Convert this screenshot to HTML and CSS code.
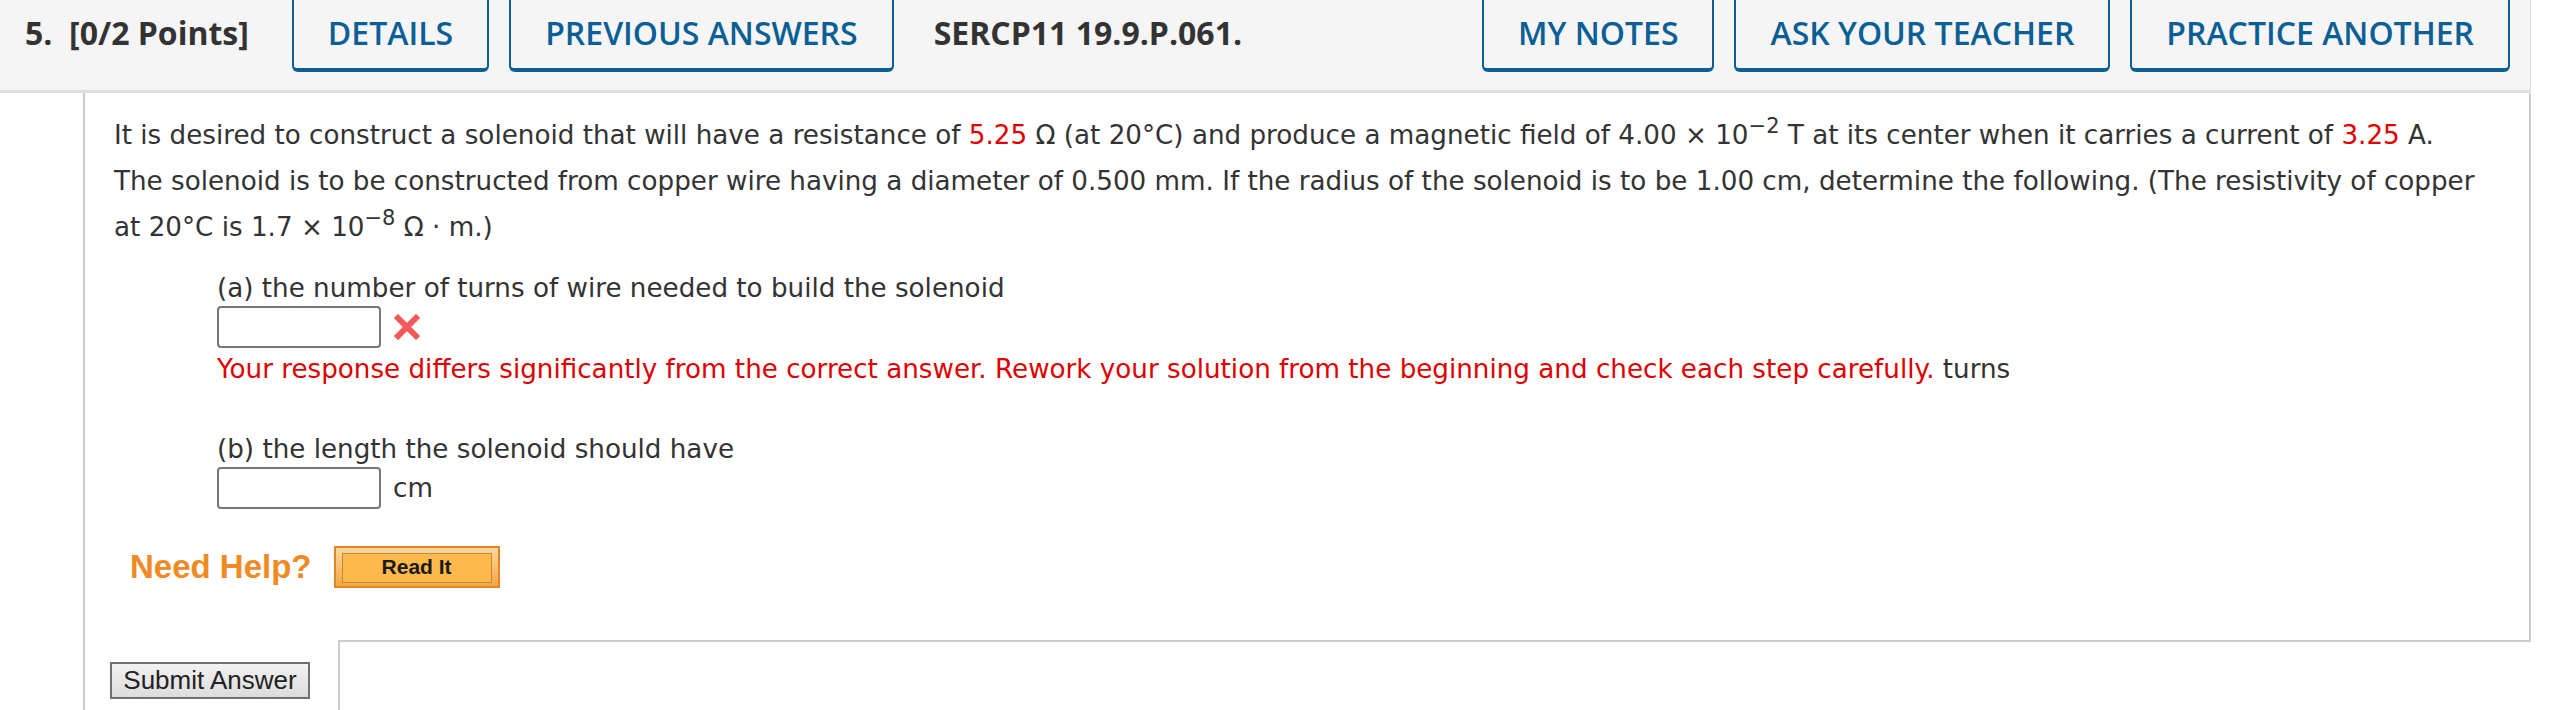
FILE: index.html
```html
<!DOCTYPE html>
<html lang="en">
<head>
    <meta charset="UTF-8">
    <title>Question 5</title>
    <link rel="stylesheet" href="styles.css">
</head>
<body>
    <header class="qbar">
        <span class="qnum">5.&nbsp; [0/2 Points]</span>
        <button class="tab">DETAILS</button>
        <button class="tab">PREVIOUS ANSWERS</button>
        <span class="qcode">SERCP11 19.9.P.061.</span>
        <div class="spacer"></div>
        <button class="tab">MY NOTES</button>
        <button class="tab">ASK YOUR TEACHER</button>
        <button class="tab">PRACTICE ANOTHER</button>
    </header>

    <div class="question">
        <div class="qbody">
            <p class="prompt">It is desired to construct a solenoid that will have a resistance of <span class="given">5.25</span> &Omega; (at 20&deg;C) and produce a magnetic field of 4.00 &times; 10<sup>&minus;2</sup> T at its center when it carries a current of <span class="given">3.25</span> A. The solenoid is to be constructed from copper wire having a diameter of 0.500 mm. If the radius of the solenoid is to be 1.00 cm, determine the following. (The resistivity of copper at 20&deg;C is 1.7 &times; 10<sup>&minus;8</sup> &Omega; &middot; m.)</p>

            <div class="part">
                <div class="part-label">(a) the number of turns of wire needed to build the solenoid</div>
                <div class="answer-row">
                    <input class="answer" type="text">
                    <svg class="wrong" width="28" height="26" viewBox="0 0 28 26">
                        <path d="M5 4 L23 22 M23 4 L5 22" stroke="#f35a5a" stroke-width="6" stroke-linecap="square"/>
                    </svg>
                </div>
                <div class="feedback"><span class="red">Your response differs significantly from the correct answer. Rework your solution from the beginning and check each step carefully.</span> turns</div>
            </div>

            <div class="part part-b">
                <div class="part-label">(b) the length the solenoid should have</div>
                <div class="answer-row">
                    <input class="answer" type="text">
                    <span class="unit">cm</span>
                </div>
            </div>

            <div class="help">
                <span class="help-title">Need Help?</span>
                <button class="readit"><span>Read It</span></button>
            </div>
        </div>

        <div class="qfoot">
            <button class="submit">Submit Answer</button>
            <div class="qfoot-box"></div>
        </div>
    </div>
</body>
</html>
```

FILE: styles.css
```css
body {
    margin: 0;
    padding: 0;
    background-color: #fff;
    color: #333;
    font-family: "DejaVu Sans", Verdana, sans-serif;
    overflow: hidden;
}
.qbar {
    display: flex;
    align-items: flex-end;
    margin: -20px 23px 0 0;
    padding: 0 20px 18px 25px;
    background-color: #f5f5f5;
    border-bottom: 3px solid #ddd;
    border-right: 1px solid #ddd;
    border-bottom-right-radius: 3px;
    font-family: "Open Sans", sans-serif;
    font-size: 32px;
    font-weight: 600;
    line-height: 38px;
}
.qnum, .qcode {
    color: #333;
    padding-bottom: 20px;
    white-space: nowrap;
}
.qnum {
    font-weight: 700;
    margin-right: 43px;
}
.qcode {
    font-weight: 700;
    margin-left: 20px;
}
.spacer {
    flex-grow: 1;
}
.tab {
    font: inherit;
    color: #0b5f95;
    background-color: #f5f5f5;
    border: 2px solid #0b5f95;
    border-top: none;
    border-bottom-width: 4px;
    border-radius: 0 0 6px 6px;
    padding: 34px 34px 16px;
    margin-right: 20px;
    white-space: nowrap;
}
.tab:last-child {
    margin-right: 0;
}
.question {
    margin: 0 23px 0 83px;
    border-left: 2px solid #ccc;
}
.qbody {
    border-right: 2px solid #ccc;
    padding: 19px 46px 52px 29px;
    font-size: 26.2px;
}
.prompt {
    margin: 0;
    line-height: 46px;
}
.prompt sup {
    font-size: 21px;
    line-height: 0;
    vertical-align: 11px;
}
.given, .red {
    color: #e00000;
}
.part {
    margin: 20px 0 0 103px;
    line-height: 36px;
}
.part-b {
    margin-top: 44px;
}
.answer-row {
    display: flex;
    align-items: center;
    height: 42px;
}
.answer {
    width: 164px;
    height: 42px;
    box-sizing: border-box;
    border: 2px solid #777;
    border-radius: 4px;
    background-color: #fff;
    margin: 0;
}
.wrong {
    margin-left: 12px;
}
.unit {
    margin-left: 12px;
}
.feedback {
    margin-top: 3px;
}
.help {
    display: flex;
    align-items: center;
    margin: 37px 0 0 16px;
}
.help-title {
    font-family: "Liberation Sans", Arial, sans-serif;
    font-weight: bold;
    font-size: 33px;
    color: #f08a24;
    margin-right: 22px;
}
.readit {
    width: 166px;
    height: 42px;
    padding: 5px 6px;
    border: 2px solid #e08528;
    background: linear-gradient(#ffd7a0, #f7a640);
    box-sizing: border-box;
}
.readit span {
    display: block;
    height: 100%;
    border: 1px solid #c48a3e;
    background-color: #fdb94b;
    font-family: "Liberation Sans", Arial, sans-serif;
    font-weight: bold;
    font-size: 21px;
    line-height: 26px;
    color: #1a1a1a;
}
.qfoot {
    display: flex;
    align-items: flex-start;
}
.submit {
    margin: 22px 0 0 25px;
    width: 200px;
    height: 37px;
    border: 2px solid #707070;
    background: linear-gradient(#f2f2f2, #dcdcdc);
    font-family: "Liberation Sans", Arial, sans-serif;
    font-size: 26px;
    color: #222;
    padding: 0;
}
.qfoot-box {
    flex-grow: 1;
    height: 80px;
    margin-left: 28px;
    border-top: 2px solid #ccc;
    border-left: 2px solid #ccc;
}
```
